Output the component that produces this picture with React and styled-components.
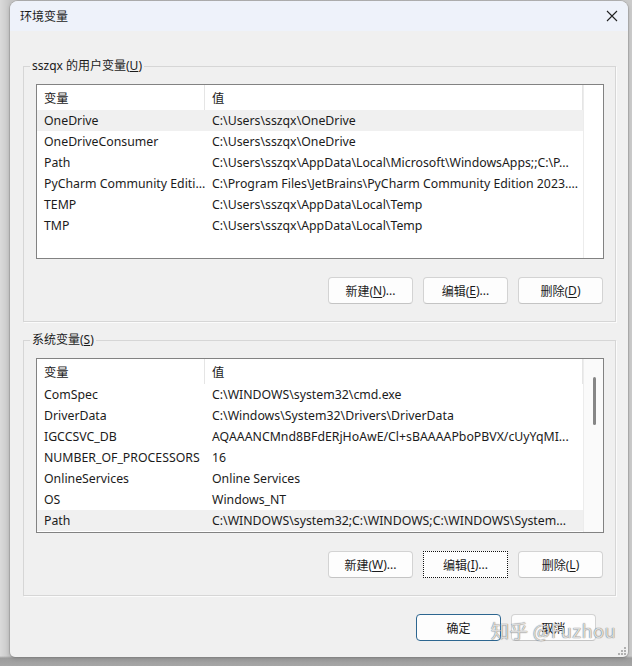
import React from 'react';
import styled, { createGlobalStyle } from 'styled-components';

const GlobalStyle = createGlobalStyle`
  html, body {
    margin: 0;
    padding: 0;
  }
  body {
    width: 632px;
    height: 666px;
    overflow: hidden;
    font-family: "Noto Sans", "Noto Sans CJK SC", sans-serif;
    font-size: 12px;
    color: #1b1b1b;
  }
`

const Desktop = styled.div`
  position: relative;
  width: 632px;
  height: 666px;
  box-sizing: border-box;
  padding: 1px 4px 9px 10px;
  background:
    linear-gradient(to bottom, rgba(0,0,0,0) 656px, #9c9c9c 658px, #a6a6a6 100%),
    linear-gradient(to right, #dadada 0, #c6c6c6 10px, #cbcbcb 100%);
`

const Window = styled.div`
  display: flex;
  flex-direction: column;
  height: 100%;
  background: #f0f0f0;
  border-radius: 8px 8px 5px 5px;
  box-shadow: 0 0 0 1px rgba(0,0,0,0.1), 0 1px 4px rgba(0,0,0,0.18);
  overflow: hidden;
  position: relative;
`

const TitleBar = styled.div`
  height: 30px;
  flex-shrink: 0;
  display: flex;
  align-items: center;
  justify-content: space-between;
  padding: 0 10px 0 10px;
  background: #eef2fa;
  font-size: 12px;
`

const Body = styled.div`
  flex: 1;
  display: flex;
  flex-direction: column;
  padding: 27px 12px 0 13px;
`

const Group = styled.fieldset`
  margin: 0;
  padding: 0;
  min-width: 0;
  border: 1px solid #d6d6d6;
  box-shadow: 1px 1px 0 #fbfbfb;
  & + & {
    margin-top: 10px;
  }
`

const Legend = styled.legend`
  margin-left: 6px;
  padding: 0 2px;
  line-height: 16px;
  font-size: 12px;
`

const GroupInner = styled.div`
  padding: 10px 11px 17px 12px;
`

const List = styled.div`
  height: 175px;
  box-sizing: border-box;
  border: 1px solid #828282;
  background: #fff;
  display: grid;
  grid-template-columns: 1fr 20px;
  overflow: hidden;
`

const Rows = styled.div`
  display: flex;
  flex-direction: column;
  min-width: 0;
`

const Row = styled.div`
  display: grid;
  grid-template-columns: 168px 1fr;
  height: ${p => (p.$header ? 25 : 21)}px;
  flex-shrink: 0;
  align-items: center;
  background: ${p => (p.$selected ? '#f0f0f0' : 'transparent')};
`

const Cell = styled.div`
  padding-left: 7px;
  font-size: 12.3px;
  white-space: nowrap;
  overflow: hidden;
  height: 100%;
  display: flex;
  align-items: center;
  box-sizing: border-box;
  border-right: ${p => (p.$sep ? '1px solid #e5e5e5' : 'none')};
`

const ScrollArea = styled.div`
  position: relative;
  border-left: 1px solid #ececec;
  background: ${p => (p.$bar ? '#fafafa' : '#fff')};
`

const Thumb = styled.div`
  position: absolute;
  left: 9px;
  top: 18px;
  width: 3px;
  height: 48px;
  border-radius: 2px;
  background: #868686;
`

const ButtonRow = styled.div`
  display: flex;
  justify-content: flex-end;
  gap: 10px;
  margin-top: 18px;
  padding-right: ${p => p.$pr || 0}px;
`

const Button = styled.div`
  width: 85px;
  height: 27px;
  box-sizing: border-box;
  display: flex;
  align-items: center;
  justify-content: center;
  font-size: 12px;
  background: #fdfdfd;
  border: 1px solid ${p => (p.$default ? '#2d6690' : '#d3d3d3')};
  border-bottom-color: ${p => (p.$default ? '#2d6690' : '#c4c4c4')};
  border-radius: 4px;
  outline: ${p => (p.$focused ? '1px dotted #111' : 'none')};
  outline-offset: -1px;
  ${p => p.$focused && 'border-color: transparent; border-radius: 0;'}
  u {
    text-underline-offset: 2px;
  }
`

const Footer = styled.div`
  display: flex;
  justify-content: flex-end;
  gap: 10px;
  margin-top: 18px;
  padding-right: 20px;
`

const Watermark = styled.div`
  position: absolute;
  right: 12px;
  bottom: 14px;
  font-family: "Noto Sans CJK SC", "Noto Sans", sans-serif;
  font-size: 18.5px;
  letter-spacing: 0.3px;
  color: rgba(255,255,255,0.78);
  text-shadow: 0 0 1px rgba(0,0,0,0.55), 0 0 1px rgba(0,0,0,0.35);
  pointer-events: none;
`

const Grip = styled.svg`
  position: absolute;
  right: 2px;
  bottom: 2px;
`

const userVars = [
  ['OneDrive', 'C:\\Users\\sszqx\\OneDrive'],
  ['OneDriveConsumer', 'C:\\Users\\sszqx\\OneDrive'],
  ['Path', 'C:\\Users\\sszqx\\AppData\\Local\\Microsoft\\WindowsApps;;C:\\P...'],
  ['PyCharm Community Editi...', 'C:\\Program Files\\JetBrains\\PyCharm Community Edition 2023....'],
  ['TEMP', 'C:\\Users\\sszqx\\AppData\\Local\\Temp'],
  ['TMP', 'C:\\Users\\sszqx\\AppData\\Local\\Temp'],
]

const sysVars = [
  ['ComSpec', 'C:\\WINDOWS\\system32\\cmd.exe'],
  ['DriverData', 'C:\\Windows\\System32\\Drivers\\DriverData'],
  ['IGCCSVC_DB', 'AQAAANCMnd8BFdERjHoAwE/Cl+sBAAAAPboPBVX/cUyYqMI...'],
  ['NUMBER_OF_PROCESSORS', '16'],
  ['OnlineServices', 'Online Services'],
  ['OS', 'Windows_NT'],
  ['Path', 'C:\\WINDOWS\\system32;C:\\WINDOWS;C:\\WINDOWS\\System...'],
]

const VarList = ({ items, selected, scrollbar }) => (
  <List>
    <Rows>
      <Row $header>
        <Cell $sep>变量</Cell>
        <Cell $sep>值</Cell>
      </Row>
      {items.map(([name, value], i) => (
        <Row key={name + i} $selected={i === selected}>
          <Cell>{name}</Cell>
          <Cell>{value}</Cell>
        </Row>
      ))}
    </Rows>
    <ScrollArea $bar={scrollbar}>{scrollbar && <Thumb />}</ScrollArea>
  </List>
)

const CloseIcon = () => (
  <svg width="12" height="12" viewBox="0 0 12 12">
    <path d="M1 1 L11 11 M11 1 L1 11" stroke="#222" strokeWidth="1.1" />
  </svg>
)

const App = () => (
  <>
    <GlobalStyle />
    <Desktop>
      <Window>
        <TitleBar>
          <span>环境变量</span>
          <CloseIcon />
        </TitleBar>
        <Body>
          <Group>
            <Legend>sszqx 的用户变量(<u>U</u>)</Legend>
            <GroupInner>
              <VarList items={userVars} selected={0} />
              <ButtonRow $pr={1}>
                <Button>新建(<u>N</u>)...</Button>
                <Button>编辑(<u>E</u>)...</Button>
                <Button>删除(<u>D</u>)</Button>
              </ButtonRow>
            </GroupInner>
          </Group>
          <Group>
            <Legend>系统变量(<u>S</u>)</Legend>
            <GroupInner>
              <VarList items={sysVars} selected={6} scrollbar />
              <ButtonRow $pr={1}>
                <Button>新建(<u>W</u>)...</Button>
                <Button $focused>编辑(<u>I</u>)...</Button>
                <Button>删除(<u>L</u>)</Button>
              </ButtonRow>
            </GroupInner>
          </Group>
          <Footer>
            <Button $default>确定</Button>
            <Button>取消</Button>
          </Footer>
        </Body>
        <Watermark>知乎 @Fuzhou</Watermark>
        <Grip width="8" height="8" viewBox="0 0 8 8">
          <rect x="6" y="0" width="2" height="2" fill="#b0b0b0" />
          <rect x="3" y="3" width="2" height="2" fill="#b0b0b0" />
          <rect x="6" y="3" width="2" height="2" fill="#b0b0b0" />
          <rect x="0" y="6" width="2" height="2" fill="#b0b0b0" />
          <rect x="3" y="6" width="2" height="2" fill="#b0b0b0" />
          <rect x="6" y="6" width="2" height="2" fill="#b0b0b0" />
        </Grip>
      </Window>
    </Desktop>
  </>
)

export default App;
